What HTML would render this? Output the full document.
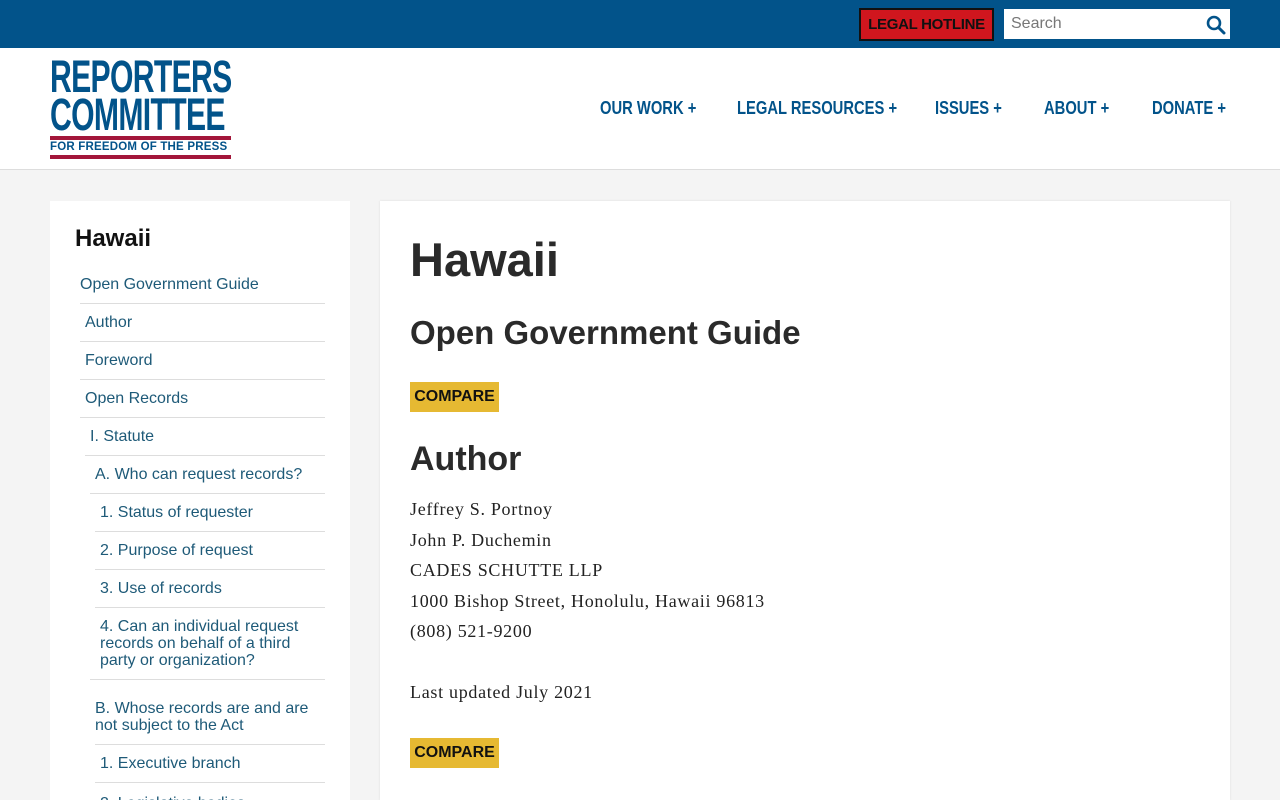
<!DOCTYPE html>
<html><head><meta charset="utf-8"><style>
*{margin:0;padding:0;box-sizing:border-box}
html,body{width:1280px;height:800px;overflow:hidden}
body{background:#f4f4f4;font-family:"Liberation Sans",sans-serif;position:relative}
.top{position:absolute;left:0;top:0;width:1280px;height:48px;background:#02538a}
.hot{position:absolute;left:859px;top:8px;width:135px;height:33px;background:#d0161e;border:2px solid #111;color:#111;font-weight:bold;font-size:15px;line-height:29px;text-align:center;letter-spacing:-.3px}
.search{position:absolute;left:1004px;top:9px;width:226px;height:30px;background:#fff;color:#777;font-size:16px;line-height:30px;padding-left:7px}
.hdr{position:absolute;left:0;top:48px;width:1280px;height:122px;background:#fff;border-bottom:1px solid #ddd}
.logo{position:absolute;left:50px;top:58px;width:181px}
.big{font-weight:bold;color:#02538a;font-size:45px;line-height:38px;letter-spacing:-1px;transform:scaleX(.67);transform-origin:left;white-space:nowrap}
.nav{position:absolute;top:98px;font-weight:bold;color:#02538a;font-size:18px;white-space:nowrap;transform:scaleX(.82);transform-origin:left}
.side{position:absolute;left:50px;top:201px;width:300px;height:599px;background:#fff;overflow:hidden}
.side h2{position:absolute;left:25px;top:24px;font-size:24px;color:#111}
.it{position:absolute;right:25px;color:#1e5a78;font-size:16px;line-height:17px;border-bottom:1px solid #ddd;display:flex;align-items:center;padding-left:5px}
.main{position:absolute;left:380px;top:201px;width:850px;height:599px;background:#fff;box-shadow:0 0 2px #ddd}
.h{position:absolute;left:30px;color:#2a2a2a;font-weight:bold}
.cmp{position:absolute;left:30px;width:89px;height:30px;background:#e6b932;color:#111;font-weight:bold;font-size:16px;line-height:30px;text-align:center}
.body{position:absolute;left:30px;top:293px;font-family:"Liberation Serif",serif;font-size:18px;line-height:30.5px;color:#222;letter-spacing:.7px}
</style></head><body>
<div class="top"></div>
<div class="hot">LEGAL HOTLINE</div>
<div class="search">Search
<svg style="position:absolute;right:4px;top:6px" width="20" height="20" viewBox="0 0 20 20"><circle cx="8" cy="8" r="6" fill="none" stroke="#02538a" stroke-width="2.6"/><path d="M12.5 12.5L18 18" stroke="#02538a" stroke-width="3" stroke-linecap="round"/></svg></div>
<div class="hdr"></div>
<div class="logo">
<div class="big">REPORTERS</div>
<div class="big">COMMITTEE</div>
<div style="height:4px;background:#a3163a;margin-top:2px"></div>
<div style="font-weight:bold;color:#02538a;font-size:11.5px;line-height:15px;letter-spacing:.2px;white-space:nowrap">FOR FREEDOM OF THE PRESS</div>
<div style="height:4px;background:#a3163a"></div>
</div>
<div class="nav" style="left:600px">OUR WORK +</div>
<div class="nav" style="left:737px">LEGAL RESOURCES +</div>
<div class="nav" style="left:935px">ISSUES +</div>
<div class="nav" style="left:1044px">ABOUT +</div>
<div class="nav" style="left:1152px">DONATE +</div>
<div class="side"><h2>Hawaii</h2>
<div class="it" style="left:30px;top:64px;height:39px;padding-left:0">Open Government Guide</div>
<div class="it" style="left:30px;top:103px;height:38px">Author</div>
<div class="it" style="left:30px;top:141px;height:38px">Foreword</div>
<div class="it" style="left:30px;top:179px;height:38px">Open Records</div>
<div class="it" style="left:35px;top:217px;height:38px">I. Statute</div>
<div class="it" style="left:40px;top:255px;height:38px">A. Who can request records?</div>
<div class="it" style="left:45px;top:293px;height:38px">1. Status of requester</div>
<div class="it" style="left:45px;top:331px;height:38px">2. Purpose of request</div>
<div class="it" style="left:45px;top:369px;height:38px">3. Use of records</div>
<div class="it" style="left:40px;top:407px;height:72px;padding-left:10px">4. Can an individual request records on behalf of a third party or organization?</div>
<div class="it" style="left:45px;top:479px;height:65px;padding-left:0;padding-top:10px">B. Whose records are and are not subject to the Act</div>
<div class="it" style="left:45px;top:544px;height:38px">1. Executive branch</div>
<div class="it" style="left:45px;top:582px;height:30px;align-items:flex-end">2. Legislative bodies</div>
</div>
<div class="main">
<div class="h" style="top:31px;font-size:47px">Hawaii</div>
<div class="h" style="top:113px;font-size:33px">Open Government Guide</div>
<div class="cmp" style="top:181px">COMPARE</div>
<div class="h" style="top:239px;font-size:34px">Author</div>
<div class="body">Jeffrey S. Portnoy<br>John P. Duchemin<br>CADES SCHUTTE LLP<br>1000 Bishop Street, Honolulu, Hawaii 96813<br>(808) 521-9200<br><br>Last updated July 2021</div>
<div class="cmp" style="top:537px">COMPARE</div>
</div>
</body></html>
